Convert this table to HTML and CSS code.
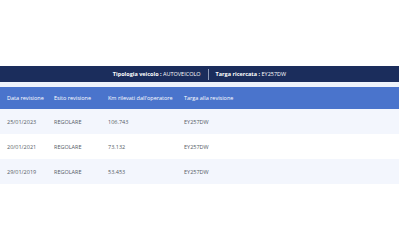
FILE: index.html
```html
<!DOCTYPE html>
<html lang="it">
<head>
<meta charset="utf-8">
<link rel="stylesheet" href="styles.css">
</head>
<body>
<div class="page">
  <div class="search-bar">
    <span class="item"><b>Tipologia veicolo :</b> AUTOVEICOLO</span>
    <span class="sep"></span>
    <span class="item"><b>Targa ricercata :</b> EY257DW</span>
  </div>
  <div class="results">
    <table class="rev-table">
      <thead>
        <tr>
          <th class="c1">Data revisione</th>
          <th class="c2">Esito revisione</th>
          <th class="c3">Km rilevati dall'operatore</th>
          <th class="c4">Targa alla revisione</th>
        </tr>
      </thead>
      <tbody>
        <tr class="alt"><td>25/01/2023</td><td>REGOLARE</td><td>106.743</td><td>EY257DW</td></tr>
        <tr><td>20/01/2021</td><td>REGOLARE</td><td>73.132</td><td>EY257DW</td></tr>
        <tr class="alt"><td>29/01/2019</td><td>REGOLARE</td><td>53.453</td><td>EY257DW</td></tr>
      </tbody>
    </table>
  </div>
</div>
</body>
</html>
```
FILE: styles.css
```css
html, body {
  margin: 0;
  padding: 0;
  background: #ffffff;
}
body {
  font-family: "Open Sans", "Liberation Sans", sans-serif;
  color: #555b66;
}
.page {
  width: 399px;
  padding-top: 66px;
}
.search-bar {
  height: 16px;
  background: #1b2d5c;
  color: #ffffff;
  display: flex;
  align-items: center;
  justify-content: center;
  gap: 7px;
  font-size: 5.5px;
}
.search-bar b {
  font-weight: 700;
}
.sep {
  width: 1px;
  height: 11px;
  background: #8e9ab8;
}
.results {
  background: #eef3fb;
  padding-top: 5px;
}
.rev-table {
  width: 100%;
  border-collapse: collapse;
  font-size: 5.5px;
  background: #ffffff;
}
.rev-table th {
  background: #4a74cc;
  color: #ffffff;
  font-weight: 400;
  text-align: left;
  height: 22px;
  padding: 0 0 0 7px;
}
.rev-table td {
  height: 25px;
  padding: 0 0 0 7px;
}
.rev-table .alt td {
  background: #f3f6fd;
}
.c1 { width: 40px; }
.c2 { width: 47px; }
.c3 { width: 69px; }
```
